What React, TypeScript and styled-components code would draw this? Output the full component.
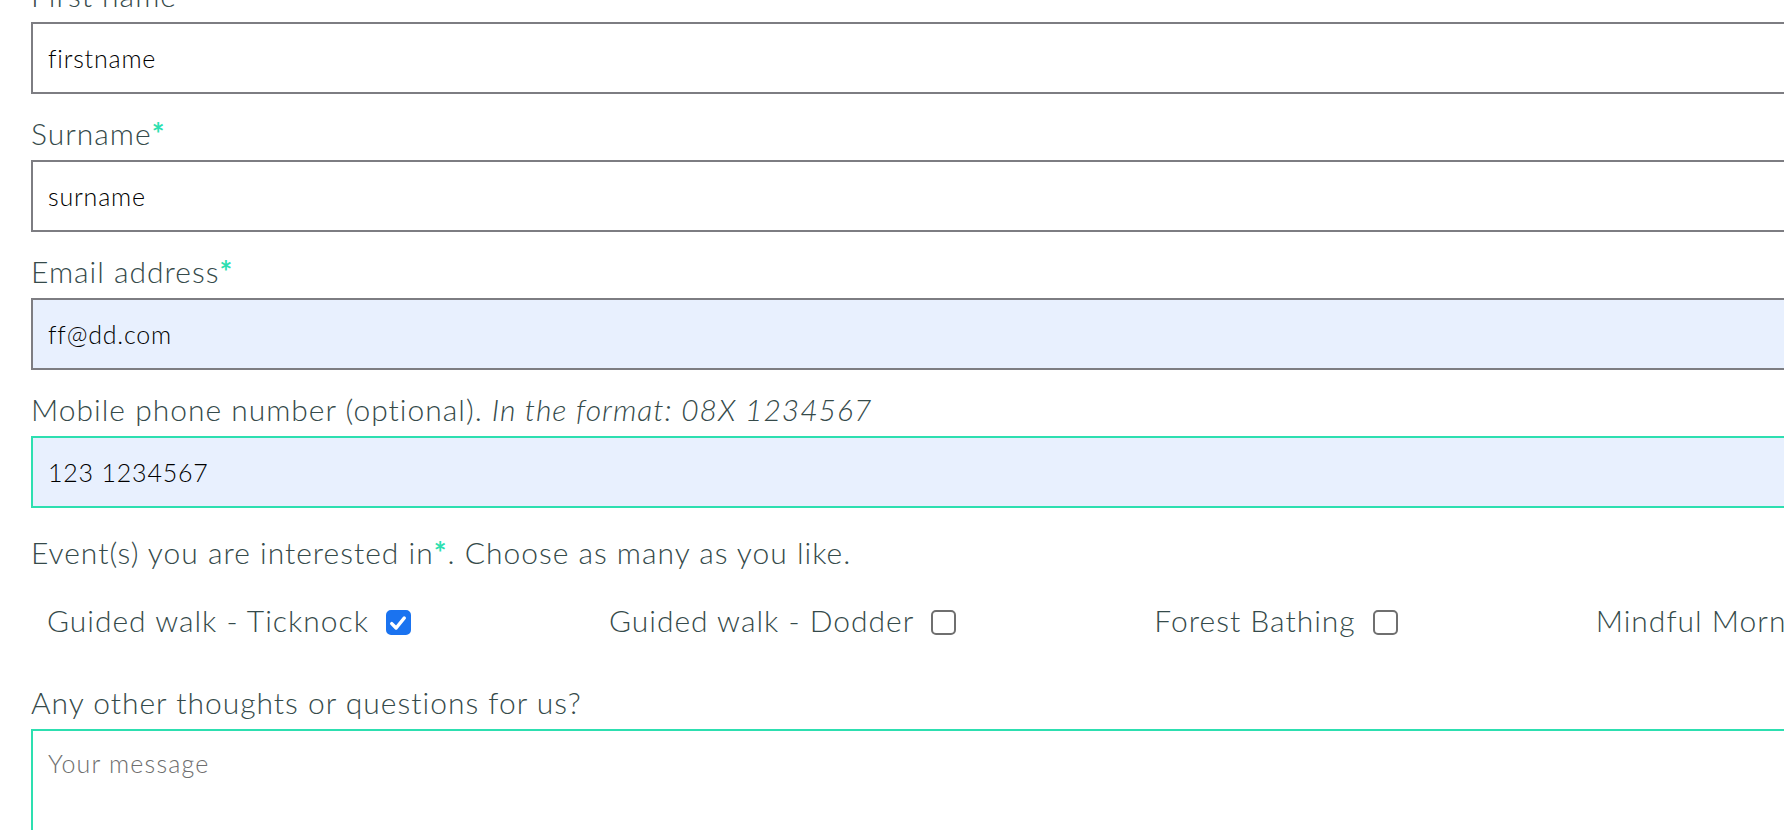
import React from "react";
import styled, { createGlobalStyle } from "styled-components";

const GlobalStyle = createGlobalStyle`
  html, body {
    margin: 0;
    padding: 0;
    background: #ffffff;
    overflow: hidden;
  }
  body {
    font-family: "Lato", "Noto Sans", sans-serif;
  }
  * { box-sizing: border-box; }
`;

const ACCENT = "#2ddfb0";
const LABEL = "#354a4a";

const Form = styled.form`
  width: 1900px;
  margin-top: -23px;
  padding-left: 31px;
  display: flex;
  flex-direction: column;
`;

const Group = styled.div`
  display: flex;
  flex-direction: column;
  margin-bottom: 21px;
`;

const Label = styled.label<{ $gapTop?: number }>`
  display: block;
  font-family: "Lato", sans-serif;
  font-weight: 300;
  font-size: 30px;
  line-height: 36px;
  color: ${LABEL};
  margin: ${(p) => p.$gapTop ?? 0}px 0 9px 0;
  letter-spacing: 1px;
`;

const Star = styled.span`
  color: ${ACCENT};
  font-weight: 700;
`;

const Hint = styled.em`
  font-style: italic;
`;

const Input = styled.input<{ $filled?: boolean; $focused?: boolean }>`
  display: block;
  width: 100%;
  height: 72px;
  padding: 0 15px;
  border: 2px solid ${(p) => (p.$focused ? ACCENT : "#7d7d82")};
  border-radius: 0;
  background: ${(p) => (p.$filled ? "#e8f0fe" : "#ffffff")};
  font-family: "Lato", sans-serif;
  font-size: 25px;
  font-weight: 300;
  letter-spacing: 0.8px;
  color: #000000;
  outline: none;
`;

const Legend = styled.p`
  margin: 5px 0 32px 0;
  font-family: "Lato", sans-serif;
  font-weight: 300;
  font-size: 30px;
  line-height: 36px;
  color: ${LABEL};
  letter-spacing: 1px;
`;

const CheckRow = styled.div`
  display: flex;
  flex-wrap: nowrap;
  padding-left: 16px;
  gap: 198px;
  height: 36px;
`;

const CheckItem = styled.label`
  display: flex;
  align-items: center;
  gap: 17px;
  white-space: nowrap;
  font-family: "Lato", sans-serif;
  font-weight: 300;
  font-size: 30px;
  line-height: 36px;
  color: ${LABEL};
  letter-spacing: 1px;
  cursor: pointer;
`;

const Box = styled.span<{ $checked?: boolean }>`
  flex: none;
  width: 25px;
  height: 25px;
  margin-top: 5px;
  border-radius: 5px;
  border: 2px solid ${(p) => (p.$checked ? "#1a73f0" : "#6f6f6f")};
  background: ${(p) => (p.$checked ? "#1a73f0" : "#ffffff")};
  display: flex;
  align-items: center;
  justify-content: center;
`;

const TextArea = styled.textarea`
  display: block;
  width: 100%;
  height: 220px;
  padding: 15px 15px;
  border: 2px solid ${ACCENT};
  border-radius: 0;
  resize: none;
  outline: none;
  font-family: "Lato", sans-serif;
  font-size: 25px;
  font-weight: 300;
  letter-spacing: 1.2px;
  line-height: 34px;
  color: #111;
  &::placeholder {
    color: #6e6e6e;
    opacity: 1;
  }
`;

const Tick = () => (
  <svg width="20" height="20" viewBox="0 0 16 16" fill="none">
    <path
      d="M3 8.5 L6.5 12 L13 4"
      stroke="#ffffff"
      strokeWidth="2.8"
      strokeLinecap="round"
      strokeLinejoin="round"
    />
  </svg>
);

const events = [
  { name: "Guided walk - Ticknock", checked: true },
  { name: "Guided walk - Dodder", checked: false },
  { name: "Forest Bathing", checked: false },
  { name: "Mindful Mornings", checked: false },
];

export default function App() {
  return (
    <>
      <GlobalStyle />
      <Form onSubmit={(e) => e.preventDefault()}>
        <Group>
          <Label htmlFor="fn">First name</Label>
          <Input id="fn" defaultValue="firstname" />
        </Group>
        <Group>
          <Label htmlFor="sn">
            Surname<Star>*</Star>
          </Label>
          <Input id="sn" defaultValue="surname" />
        </Group>
        <Group>
          <Label htmlFor="em">
            Email address<Star>*</Star>
          </Label>
          <Input id="em" defaultValue="ff@dd.com" $filled />
        </Group>
        <Group>
          <Label htmlFor="ph">
            Mobile phone number (optional). <Hint>In the format: 08X 1234567</Hint>
          </Label>
          <Input id="ph" defaultValue="123 1234567" $filled $focused />
        </Group>
        <Legend>
          Event(s) you are interested in<Star>*</Star>. Choose as many as you like.
        </Legend>
        <CheckRow>
          {events.map((ev) => (
            <CheckItem key={ev.name}>
              {ev.name}
              <Box $checked={ev.checked}>{ev.checked && <Tick />}</Box>
            </CheckItem>
          ))}
        </CheckRow>
        <Label htmlFor="msg" $gapTop={46}>
          Any other thoughts or questions for us?
        </Label>
        <TextArea id="msg" placeholder="Your message" />
      </Form>
    </>
  );
}
